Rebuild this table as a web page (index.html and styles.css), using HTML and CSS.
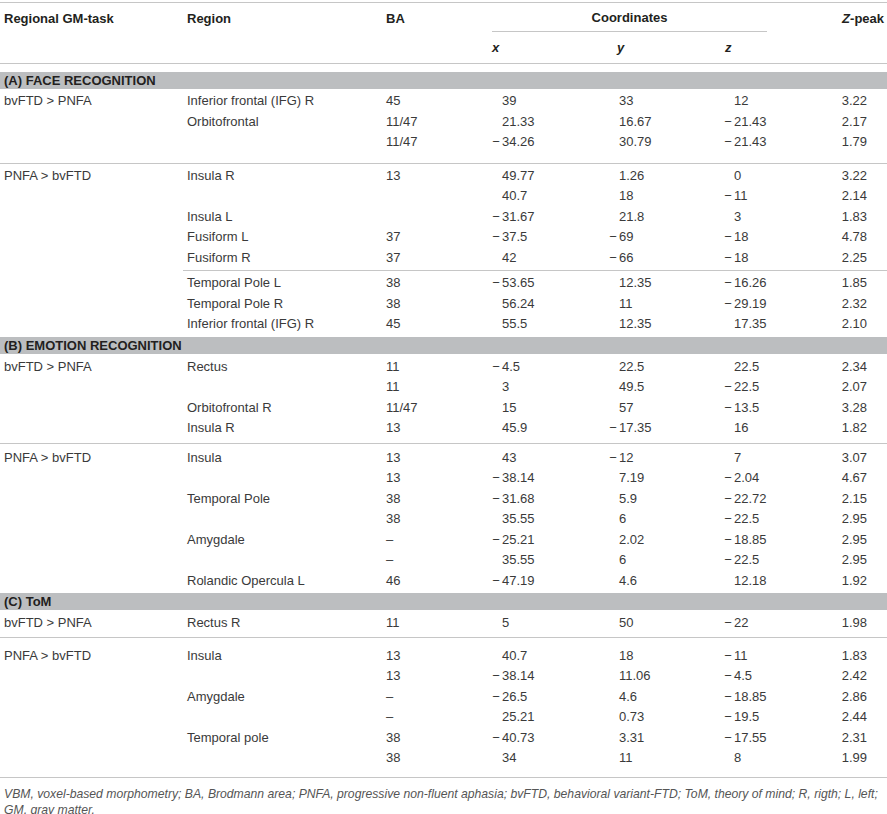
FILE: index.html
```html
<!DOCTYPE html>
<html lang="en">
  <head>
    <title>Regional GM-task table</title>
    <meta charset="UTF-8" />
    <link rel="stylesheet" href="styles.css">
  </head>
  <body>

    <table class="vbm">
      <colgroup>
        <col class="c-task"><col class="c-region"><col class="c-ba">
        <col class="c-x"><col class="c-y"><col class="c-z"><col class="c-peak">
      </colgroup>
      <thead>
        <tr class="head-top">
          <th rowspan="2">Regional GM-task</th>
          <th rowspan="2">Region</th>
          <th rowspan="2">BA</th>
          <th colspan="3" class="coords"><div class="coords-label">Coordinates</div></th>
          <th rowspan="2" class="peak"><i>Z</i>-peak</th>
        </tr>
        <tr class="head-sub">
          <th class="hx"><i>x</i></th>
          <th class="hy"><i>y</i></th>
          <th class="hz"><i>z</i></th>
        </tr>
      </thead>

      <!-- (A) face recognition -->
      <tbody class="sec-a">
        <tr class="section first"><td colspan="7"><div class="bar">(A) FACE RECOGNITION</div></td></tr>
        <tr><td>bvFTD &gt; PNFA</td><td>Inferior frontal (IFG) R</td><td>45</td><td class="n">39</td><td class="n">33</td><td class="n">12</td><td class="p">3.22</td></tr>
        <tr><td></td><td>Orbitofrontal</td><td>11/47</td><td class="n">21.33</td><td class="n">16.67</td><td class="n"><span class="m">−</span>21.43</td><td class="p">2.17</td></tr>
        <tr class="end"><td></td><td></td><td>11/47</td><td class="n"><span class="m">−</span>34.26</td><td class="n">30.79</td><td class="n"><span class="m">−</span>21.43</td><td class="p">1.79</td></tr>
      </tbody>
      <tbody class="group grp-a">
        <tr class="start"><td>PNFA &gt; bvFTD</td><td>Insula R</td><td>13</td><td class="n">49.77</td><td class="n">1.26</td><td class="n">0</td><td class="p">3.22</td></tr>
        <tr><td></td><td></td><td></td><td class="n">40.7</td><td class="n">18</td><td class="n"><span class="m">−</span>11</td><td class="p">2.14</td></tr>
        <tr><td></td><td>Insula L</td><td></td><td class="n"><span class="m">−</span>31.67</td><td class="n">21.8</td><td class="n">3</td><td class="p">1.83</td></tr>
        <tr><td></td><td>Fusiform L</td><td>37</td><td class="n"><span class="m">−</span>37.5</td><td class="n"><span class="m">−</span>69</td><td class="n"><span class="m">−</span>18</td><td class="p">4.78</td></tr>
        <tr class="pre-sub"><td></td><td>Fusiform R</td><td>37</td><td class="n">42</td><td class="n"><span class="m">−</span>66</td><td class="n"><span class="m">−</span>18</td><td class="p">2.25</td></tr>
        <tr class="sub"><td></td><td>Temporal Pole L</td><td>38</td><td class="n"><span class="m">−</span>53.65</td><td class="n">12.35</td><td class="n"><span class="m">−</span>16.26</td><td class="p">1.85</td></tr>
        <tr><td></td><td>Temporal Pole R</td><td>38</td><td class="n">56.24</td><td class="n">11</td><td class="n"><span class="m">−</span>29.19</td><td class="p">2.32</td></tr>
        <tr><td></td><td>Inferior frontal (IFG) R</td><td>45</td><td class="n">55.5</td><td class="n">12.35</td><td class="n">17.35</td><td class="p">2.10</td></tr>
      </tbody>

      <!-- (B) emotion recognition -->
      <tbody class="sec-b">
        <tr class="section"><td colspan="7"><div class="bar">(B) EMOTION RECOGNITION</div></td></tr>
        <tr><td>bvFTD &gt; PNFA</td><td>Rectus</td><td>11</td><td class="n"><span class="m">−</span>4.5</td><td class="n">22.5</td><td class="n">22.5</td><td class="p">2.34</td></tr>
        <tr><td></td><td></td><td>11</td><td class="n">3</td><td class="n">49.5</td><td class="n"><span class="m">−</span>22.5</td><td class="p">2.07</td></tr>
        <tr><td></td><td>Orbitofrontal R</td><td>11/47</td><td class="n">15</td><td class="n">57</td><td class="n"><span class="m">−</span>13.5</td><td class="p">3.28</td></tr>
        <tr class="end"><td></td><td>Insula R</td><td>13</td><td class="n">45.9</td><td class="n"><span class="m">−</span>17.35</td><td class="n">16</td><td class="p">1.82</td></tr>
      </tbody>
      <tbody class="group grp-b">
        <tr class="start"><td>PNFA &gt; bvFTD</td><td>Insula</td><td>13</td><td class="n">43</td><td class="n"><span class="m">−</span>12</td><td class="n">7</td><td class="p">3.07</td></tr>
        <tr><td></td><td></td><td>13</td><td class="n"><span class="m">−</span>38.14</td><td class="n">7.19</td><td class="n"><span class="m">−</span>2.04</td><td class="p">4.67</td></tr>
        <tr><td></td><td>Temporal Pole</td><td>38</td><td class="n"><span class="m">−</span>31.68</td><td class="n">5.9</td><td class="n"><span class="m">−</span>22.72</td><td class="p">2.15</td></tr>
        <tr><td></td><td></td><td>38</td><td class="n">35.55</td><td class="n">6</td><td class="n"><span class="m">−</span>22.5</td><td class="p">2.95</td></tr>
        <tr><td></td><td>Amygdale</td><td>–</td><td class="n"><span class="m">−</span>25.21</td><td class="n">2.02</td><td class="n"><span class="m">−</span>18.85</td><td class="p">2.95</td></tr>
        <tr><td></td><td></td><td>–</td><td class="n">35.55</td><td class="n">6</td><td class="n"><span class="m">−</span>22.5</td><td class="p">2.95</td></tr>
        <tr><td></td><td>Rolandic Opercula L</td><td>46</td><td class="n"><span class="m">−</span>47.19</td><td class="n">4.6</td><td class="n">12.18</td><td class="p">1.92</td></tr>
      </tbody>

      <!-- (C) theory of mind -->
      <tbody class="sec-c">
        <tr class="section"><td colspan="7"><div class="bar">(C) ToM</div></td></tr>
        <tr class="end"><td>bvFTD &gt; PNFA</td><td>Rectus R</td><td>11</td><td class="n">5</td><td class="n">50</td><td class="n"><span class="m">−</span>22</td><td class="p">1.98</td></tr>
      </tbody>
      <tbody class="group grp-c">
        <tr class="start"><td>PNFA &gt; bvFTD</td><td>Insula</td><td>13</td><td class="n">40.7</td><td class="n">18</td><td class="n"><span class="m">−</span>11</td><td class="p">1.83</td></tr>
        <tr><td></td><td></td><td>13</td><td class="n"><span class="m">−</span>38.14</td><td class="n">11.06</td><td class="n"><span class="m">−</span>4.5</td><td class="p">2.42</td></tr>
        <tr><td></td><td>Amygdale</td><td>–</td><td class="n"><span class="m">−</span>26.5</td><td class="n">4.6</td><td class="n"><span class="m">−</span>18.85</td><td class="p">2.86</td></tr>
        <tr><td></td><td></td><td>–</td><td class="n">25.21</td><td class="n">0.73</td><td class="n"><span class="m">−</span>19.5</td><td class="p">2.44</td></tr>
        <tr><td></td><td>Temporal pole</td><td>38</td><td class="n"><span class="m">−</span>40.73</td><td class="n">3.31</td><td class="n"><span class="m">−</span>17.55</td><td class="p">2.31</td></tr>
        <tr class="end"><td></td><td></td><td>38</td><td class="n">34</td><td class="n">11</td><td class="n">8</td><td class="p">1.99</td></tr>
      </tbody>
    </table>

    <p class="note">VBM, voxel-based morphometry; BA, Brodmann area; PNFA, progressive non-fluent aphasia; bvFTD, behavioral variant-FTD; ToM, theory of mind; R, rigth; L, left;<br>GM, gray matter.</p>

  </body>
</html>
```

FILE: styles.css
```css
html, body {
  margin: 0;
  padding: 0;
  background: white;
  color: #3a3a3a;
  font-family: "Liberation Sans", Arial, sans-serif;
  font-size: 13px;
}

.vbm {
  width: 887px;
  margin-top: 2px;
  border-collapse: collapse;
  table-layout: fixed;
  border-top: 1px solid #c6c6c6;
  border-bottom: 1px solid #c6c6c6;
}

.c-task { width: 183px; }
.c-region { width: 199px; }
.c-ba { width: 106px; }
.c-x { width: 117px; }
.c-y { width: 115px; }
.c-z { width: 80px; }
.c-peak { width: 87px; }

/* header */
thead { border-bottom: 1px solid #c6c6c6; }
th {
  text-align: left;
  font-weight: bold;
  color: #231f20;
  padding: 0 0 0 4px;
  line-height: 15px;
}
.head-top th { vertical-align: top; padding-top: 8px; }
.head-top th.coords { padding: 7px 33px 0 4px; text-align: center; }
.coords-label { border-bottom: 1px solid #c6c6c6; padding-bottom: 6px; }
.head-sub th { height: 30px; vertical-align: middle; padding-bottom: 1px; }
.head-top th.peak { text-align: right; padding-right: 3px; }
th.hx { padding-left: 4px; }
th.hy { padding-left: 12px; }
th.hz { padding-left: 5px; }

/* body rows */
td {
  padding: 0 0 0 4px;
  height: 20.5px;
  line-height: 20.5px;
  vertical-align: top;
  white-space: nowrap;
}
td.n { padding-left: 14px; }
td.p { text-align: right; padding-right: 20px; }
.m { display: inline-block; width: 12px; margin-left: -12px; text-align: center; }

/* group separators, spacing differs a bit per section */
tbody.group { border-top: 1px solid #c6c6c6; }
.sec-a tr.end td { padding-bottom: 10px; }
.grp-a tr.start td { padding-top: 2px; }
.sec-b tr.end td { padding-bottom: 4px; }
.grp-b tr.start td { padding-top: 4px; }
.sec-c tr.end td { padding-bottom: 3px; }
.grp-c tr.start td { padding-top: 8px; }
.grp-c tr.end td { padding-bottom: 8px; }

tr.pre-sub td { padding-bottom: 2px; }
tr.sub td { padding-top: 2px; border-top: 1px solid #c6c6c6; }
tr.sub td:first-child { border-top: none; }

/* section bars */
tr.section td { padding: 2px 0 3px 0; height: auto; }
tr.section.first td { padding-top: 8px; padding-bottom: 2px; }
.bar {
  background: #bcbec0;
  color: #231f20;
  font-weight: bold;
  height: 17px;
  line-height: 17px;
  padding-left: 4px;
}

.note {
  margin: 8px 0 0 0;
  padding-left: 4px;
  font-style: italic;
  font-size: 12.2px;
  line-height: 16.5px;
  color: #555;
  white-space: nowrap;
}
```
